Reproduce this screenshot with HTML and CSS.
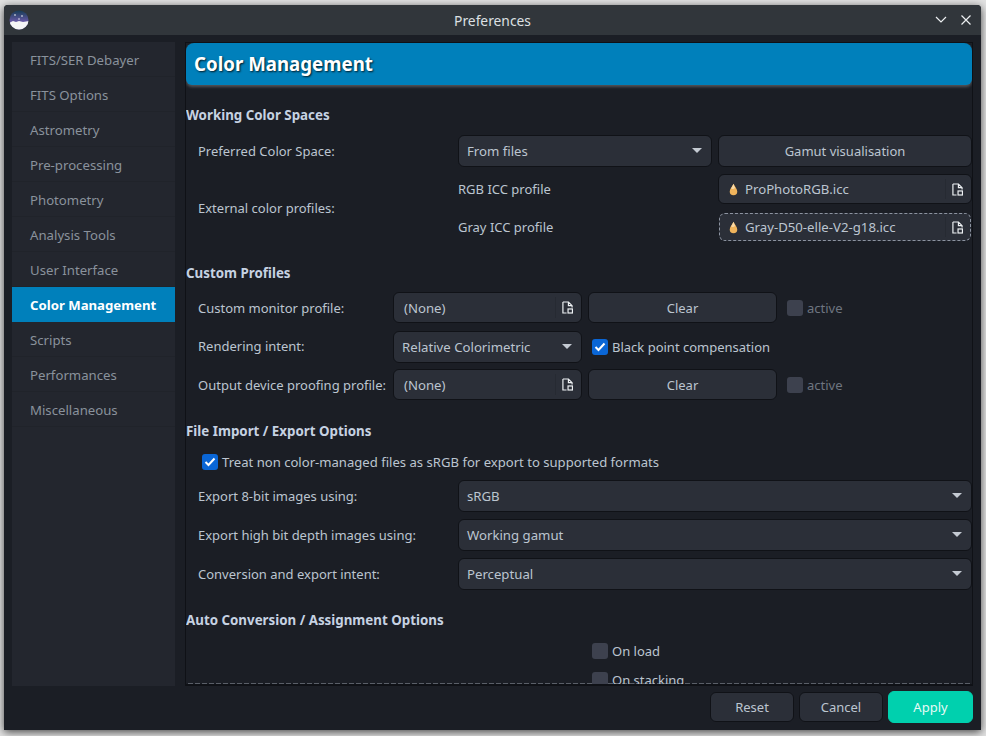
FILE: index.html
```html
<!DOCTYPE html>
<html lang="en">
<head>
    <meta charset="UTF-8">
    <title>Preferences</title>
    <link rel="stylesheet" href="styles.css">
</head>
<body>
    <svg class="defs" width="0" height="0">
        <symbol id="file" viewBox="0 0 12 14">
            <path d="M1 1h6l4 4v2M1 1v12h4M7 1v4h4" fill="none" stroke="currentColor" stroke-width="1.3"/>
            <rect x="6.6" y="8.6" width="4.8" height="4.4" fill="none" stroke="currentColor" stroke-width="1.3"/>
        </symbol>
        <symbol id="drop" viewBox="0 0 10 14">
            <path d="M5 .5C4 3 .8 6 .8 9.2A4.2 4.2 0 0 0 9.2 9.2C9.2 6 6 3 5 .5Z" fill="#f0b45c"/>
            <path d="M5 .5C4.500 2 3.500 3.500 2.500 5.500 3 7 5 7 6.800 5 6 3.500 5.300 1.500 5 .5Z" fill="#f8d9a6"/>
        </symbol>
    </svg>

    <div class="window">
        <div class="titlebar">
            <svg class="logo" width="20" height="20" viewBox="0 0 20 20">
                <defs>
                    <linearGradient id="sky" x1="0" y1="0" x2="0" y2="1">
                        <stop offset="0" stop-color="#123a52"/>
                        <stop offset="0.6" stop-color="#6a5aa8"/>
                    </linearGradient>
                    <clipPath id="disc"><circle cx="10" cy="10" r="9.500"/></clipPath>
                </defs>
                <g clip-path="url(#disc)">
                    <rect width="20" height="20" fill="url(#sky)"/>
                    <path d="M0 13l4-2 3 1 3-1 4 1 6-1v9H0z" fill="#f4f4f6"/>
                    <circle cx="6" cy="5" r=".8" fill="#fff"/>
                    <circle cx="13" cy="6" r=".8" fill="#fff"/>
                    <circle cx="10" cy="9" r=".7" fill="#fff"/>
                </g>
            </svg>
            <span class="title">Preferences</span>
            <div class="winbtns">
                <svg width="12" height="8" viewBox="0 0 12 8"><path d="M1 1l5 5 5-5" fill="none" stroke="#eceff1" stroke-width="1.200"/></svg>
                <svg width="12" height="12" viewBox="0 0 12 12"><path d="M1.500 1.500l9 9M10.500 1.500l-9 9" fill="none" stroke="#eceff1" stroke-width="1.200"/></svg>
            </div>
        </div>

        <div class="main">
            <ul class="sidebar">
                <li>FITS/SER Debayer</li>
                <li>FITS Options</li>
                <li>Astrometry</li>
                <li>Pre-processing</li>
                <li>Photometry</li>
                <li>Analysis Tools</li>
                <li>User Interface</li>
                <li class="current">Color Management</li>
                <li>Scripts</li>
                <li>Performances</li>
                <li>Miscellaneous</li>
            </ul>

            <div class="pane">
                <div class="banner">Color Management</div>

                <h3>Working Color Spaces</h3>
                <div class="form spaces">
                    <label>Preferred Color Space:</label>
                    <div class="combo">From files<i class="arrow"></i></div>
                    <button>Gamut visualisation</button>
                    <label class="tall">External color profiles:</label>
                    <label>RGB ICC profile</label>
                    <div class="edit"><svg class="drop"><use href="#drop"/></svg>ProPhotoRGB.icc<svg class="fileicon"><use href="#file"/></svg></div>
                    <label>Gray ICC profile</label>
                    <div class="edit focused"><svg class="drop"><use href="#drop"/></svg>Gray-D50-elle-V2-g18.icc<svg class="fileicon"><use href="#file"/></svg></div>
                </div>

                <h3>Custom Profiles</h3>
                <div class="form custom">
                    <label>Custom monitor profile:</label>
                    <div class="edit none">(None)<svg class="fileicon"><use href="#file"/></svg></div>
                    <button>Clear</button>
                    <span class="check off"><i class="box"></i>active</span>
                    <label>Rendering intent:</label>
                    <div class="combo">Relative Colorimetric<i class="arrow"></i></div>
                    <span class="check wide"><i class="box on"><svg width="12" height="10" viewBox="0 0 12 10"><path d="M1.500 5l3 3 6-6.500" fill="none" stroke="#fff" stroke-width="2"/></svg></i>Black point compensation</span>
                    <label>Output device proofing profile:</label>
                    <div class="edit none">(None)<svg class="fileicon"><use href="#file"/></svg></div>
                    <button>Clear</button>
                    <span class="check off"><i class="box"></i>active</span>
                </div>

                <h3>File Import / Export Options</h3>
                <span class="check treat"><i class="box on"><svg width="12" height="10" viewBox="0 0 12 10"><path d="M1.500 5l3 3 6-6.500" fill="none" stroke="#fff" stroke-width="2"/></svg></i>Treat non color-managed files as sRGB for export to supported formats</span>
                <div class="form export">
                    <label>Export 8-bit images using:</label>
                    <div class="combo">sRGB<i class="arrow"></i></div>
                    <label>Export high bit depth images using:</label>
                    <div class="combo">Working gamut<i class="arrow"></i></div>
                    <label>Conversion and export intent:</label>
                    <div class="combo">Perceptual<i class="arrow"></i></div>
                </div>

                <h3>Auto Conversion / Assignment Options</h3>
                <div class="auto">
                    <span class="check"><i class="box"></i>On load</span>
                    <span class="check"><i class="box"></i>On stacking</span>
                </div>
                <div class="dashes"></div>
            </div>
        </div>

        <div class="footer">
            <button>Reset</button>
            <button>Cancel</button>
            <button class="apply">Apply</button>
        </div>
    </div>
</body>
</html>
```

FILE: styles.css
```css
* { margin: 0; padding: 0; box-sizing: border-box; }
html, body { height: 100%; overflow: hidden; }
body { background: #e2e2e2; padding: 5px 5px 6px 4px; font-family: "Noto Sans", sans-serif; font-size: 13px; color: #bcc5d0; }
.defs { position: absolute; }
.window { height: 725px; background: #1b1e25; border-radius: 4px 4px 0 0; box-shadow: 0 2px 8px rgba(0, 0, 0, 0.7); display: flex; flex-direction: column; overflow: hidden; }

.titlebar { height: 30px; flex: none; background: #31363b; display: grid; grid-template-columns: 1fr auto 1fr; align-items: center; padding: 0 5px; }
.title { color: #dde0e3; font-size: 13.800px; }
.winbtns { display: flex; align-items: center; justify-content: flex-end; gap: 13px; padding-right: 4px; }

.main { height: 651px; flex: none; display: flex; padding: 7px 8px 0 8px; }
.sidebar { width: 163px; flex: none; height: 644px; list-style: none; background: #23262e; font-size: 13.200px; }
.sidebar li { height: 35px; line-height: 36px; padding-left: 18px; color: #8a929c; border-bottom: 1px solid #20232a; }
.sidebar li.current { background: #0080bb; color: #fff; font-weight: 700; border-bottom: none; }

.pane { position: relative; width: 788px; height: 644px; margin-left: 10px; overflow: hidden; border: 1px solid #0f1116; border-bottom-width: 2px; }
.banner { height: 42px; line-height: 42px; padding-left: 8px; background: #0080bb; border-radius: 8px 8px 6px 6px; color: #fff; font-size: 18.700px; font-weight: 700; text-shadow: 1px 1px 2px rgba(0, 0, 0, 0.8); box-shadow: 0 2px 3px rgba(210, 210, 210, 0.3); }

h3 { font-size: 13.330px; font-weight: 700; color: #c6d2e2; height: 20px; line-height: 20px; margin-top: 20px; }

.form { display: grid; padding-left: 12px; column-gap: 6px; row-gap: 7px; align-items: center; margin-top: 10px; }
.spaces { grid-template-columns: 254px 254px 254px; row-gap: 8px; padding-bottom: 1px; }
.spaces .combo, .spaces button { height: 32px; margin-bottom: -1px; }
.spaces .edit { grid-column: 3; height: 30px; }
.spaces .edit.focused { height: 28px; }
.spaces .tall { grid-row: span 2; grid-column: 1; }
.custom { grid-template-columns: 189px 189px 189px auto; margin-top: 9px; padding-bottom: 1px; }
.custom button { height: 31px; }
.custom .combo { margin-top: 1px; margin-bottom: -1px; }
.custom .check { margin-left: 4px; }
.custom .wide { grid-column: span 2; margin-top: 1px; }
.export { grid-template-columns: 254px 514px; margin-top: 8px; }

.combo, .edit, button { height: 32px; background: #2b2f38; border: 1px solid #101217; border-radius: 6px; color: #bcc5d0; font: inherit; }
.combo { display: flex; align-items: center; padding-left: 8px; position: relative; font-size: 13.200px; }
.arrow { position: absolute; right: 9px; top: 12px; border-left: 5px solid transparent; border-right: 5px solid transparent; border-top: 5px solid #c4cad2; }
.edit { height: 31px; display: flex; align-items: center; padding-left: 10px; position: relative; font-size: 13.200px; }
.edit.focused { border: 1px dashed #8c93a0; margin: 1px; padding-left: 9px; }
.drop { width: 9px; height: 13px; margin-right: 7px; }
.fileicon { position: absolute; right: 8px; top: 8px; width: 11px; height: 13px; color: #eef1f4; }
.focused .fileicon { right: 7px; top: 7px; }
.edit::after { content: ""; position: absolute; right: 25px; top: 4px; bottom: 4px; width: 1px; background: #262a32; }
.focused::after { right: 24px; top: 3px; bottom: 3px; }

.check { display: flex; align-items: center; gap: 4px; }
.off { color: #6e7580; }
.box { width: 16px; height: 16px; border-radius: 3px; background: #3d414e; display: flex; align-items: center; justify-content: center; }
.box.on { background: #0a66d6; }
.treat { margin: 11px 0 0 16px; height: 20px; font-size: 13.100px; }

.auto { position: relative; z-index: 1; display: flex; flex-direction: column; gap: 9px; padding-left: 406px; margin-top: 11px; }
.auto .check { height: 20px; }
.dashes { position: absolute; left: 2px; right: 0; bottom: 0; height: 1px; background: repeating-linear-gradient(to right, #5a5f68 0 5px, transparent 5px 7px); }

.footer { flex: 1; display: flex; justify-content: flex-end; align-items: center; gap: 5px; padding: 0 8px 2px 0; }
.footer button { width: 84px; height: 30px; }
.footer .apply { width: 85px; height: 32px; background: #00d0ae; border-color: #00d0ae; color: #e6faf5; }
```
